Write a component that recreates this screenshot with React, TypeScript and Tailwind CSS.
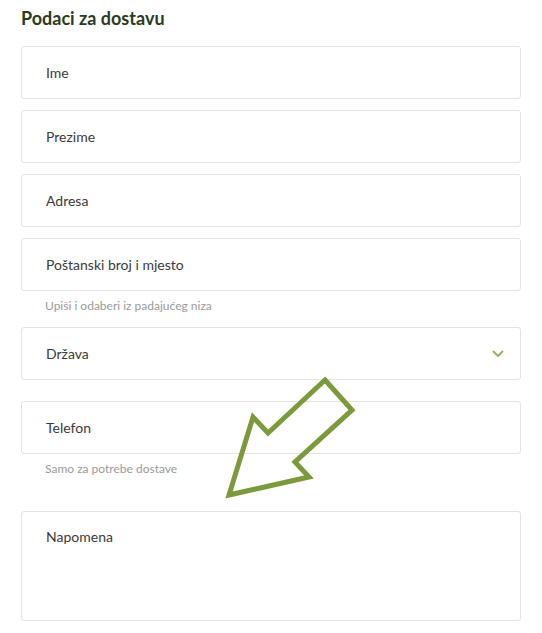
const fieldBox =
  "h-[53px] w-full flex items-center px-[24px] bg-white border border-[#e4e4e4] rounded-[3px] text-[14px] text-[#3a3a3a]";

function Field({ label, className = "" }: { label: string; className?: string }) {
  return (
    <div className={`${fieldBox} ${className}`}>
      <span>{label}</span>
    </div>
  );
}

function Hint({ text, className = "" }: { text: string; className?: string }) {
  return <p className={`px-[24px] text-[12px] leading-[16px] text-[#9a9a9a] ${className}`}>{text}</p>;
}

export default function App() {
  return (
    <div className="relative w-[542px] h-[633px] bg-white overflow-hidden" style={{ fontFamily: "Lato, 'Open Sans', sans-serif" }}>
      <div className="pl-[21px] pr-[21px] pt-[7px] w-[542px]">
        <h2 className="text-[18px] leading-[22px] font-bold text-[#2c3b20] mb-[17px]">Podaci za dostavu</h2>
        <div className="flex flex-col">
          <Field label="Ime" />
          <Field label="Prezime" className="mt-[11px]" />
          <Field label="Adresa" className="mt-[11px]" />
          <Field label="Poštanski broj i mjesto" className="mt-[11px]" />
          <Hint text="Upiši i odaberi iz padajućeg niza" className="mt-[7px]" />
          <div className={`${fieldBox} mt-[13px] justify-between pr-[16px]`}>
            <span>Država</span>
            <svg width="12" height="8" viewBox="0 0 12 8" fill="none">
              <path d="M1.5 1.5 L6 6 L10.5 1.5" stroke="#8fb254" strokeWidth="1.8" strokeLinecap="round" strokeLinejoin="round" />
            </svg>
          </div>
          <Field label="Telefon" className="mt-[21px]" />
          <Hint text="Samo za potrebe dostave" className="mt-[7px]" />
          <div className="mt-[34px] h-[110px] w-full px-[24px] pt-[14px] bg-white border border-[#e4e4e4] rounded-[3px] text-[14px] text-[#3a3a3a]">
            Napomena
          </div>
        </div>
      </div>
      <svg className="absolute left-0 top-0 pointer-events-none" width="542" height="633" viewBox="0 0 542 633">
        <polygon
          points="325,380 352,410 295,462 309,477 229,495 253,417 268,433"
          fill="none"
          stroke="#7a9a3c"
          strokeWidth="5"
          strokeLinejoin="miter"
        />
      </svg>
    </div>
  );
}
